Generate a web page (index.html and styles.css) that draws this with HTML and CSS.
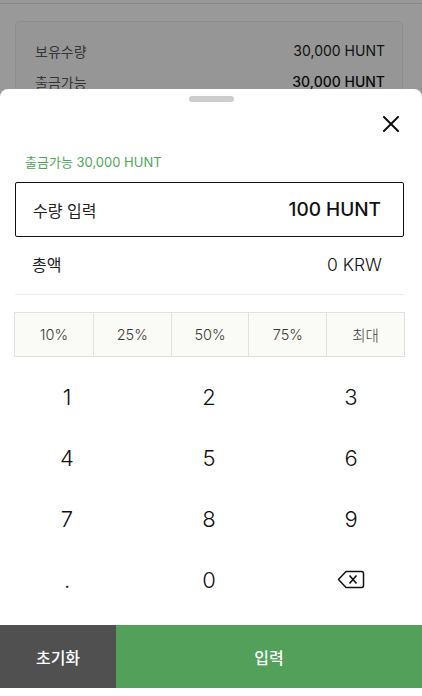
FILE: index.html
```html
<!DOCTYPE html>
<html lang="ko">
<head>
<meta charset="utf-8">
<link rel="stylesheet" href="styles.css">
</head>
<body>
<div class="page">
  <div class="topbar"></div>
  <div class="card">
    <div class="card-row"><span class="card-label">보유수량</span><span class="card-value">30,000 HUNT</span></div>
    <div class="card-row"><span class="card-label">출금가능</span><span class="card-value strong">30,000 HUNT</span></div>
  </div>
</div>
<div class="overlay"></div>
<div class="sheet">
  <div class="handle"></div>
  <div class="sheet-head">
    <svg class="close" viewBox="0 0 16 16" width="16" height="16"><path d="M1 1L15 15M15 1L1 15" stroke="#111" stroke-width="2" fill="none" stroke-linecap="square"/></svg>
  </div>
  <div class="body">
    <div class="avail">출금가능 30,000 HUNT</div>
    <div class="input-box"><span class="input-label">수량 입력</span><span class="input-value">100 HUNT</span></div>
    <div class="total-row"><span>총액</span><span class="total-value">0 KRW</span></div>
    <div class="pct-row">
      <div class="pct">10%</div><div class="pct">25%</div><div class="pct">50%</div><div class="pct">75%</div><div class="pct">최대</div>
    </div>
  </div>
  <div class="keypad">
    <div class="key">1</div><div class="key">2</div><div class="key">3</div>
    <div class="key">4</div><div class="key">5</div><div class="key">6</div>
    <div class="key">7</div><div class="key">8</div><div class="key">9</div>
    <div class="key">.</div><div class="key">0</div>
    <div class="key"><svg viewBox="0 0 28 19" width="28" height="19"><path d="M9 1.5H24.5a2 2 0 0 1 2 2V15.5a2 2 0 0 1-2 2H9L1.5 9.5Z" fill="none" stroke="#111" stroke-width="1.5" stroke-linejoin="round"/><path d="M12.5 5.5l7 8M19.5 5.5l-7 8" stroke="#111" stroke-width="1.6"/></svg></div>
  </div>
  <div class="actions">
    <button class="btn reset">초기화</button>
    <button class="btn submit">입력</button>
  </div>
</div>
</body>
</html>
```
FILE: styles.css
```css
* { box-sizing: border-box; }
html, body { margin: 0; padding: 0; }
body {
  width: 422px; height: 696px; overflow: hidden; position: relative;
  font-family: Inter, "Noto Sans CJK KR", sans-serif;
  background: #fff; color: #111;
}
.topbar { height: 4px; border-bottom: 1px solid #e2e2e2; }
.page { padding-bottom: 20px; }
.card {
  margin: 17px 19px 0 15px;
  border: 1px solid #ececec; border-radius: 4px;
  background: #fbfbfb;
  padding: 13px 17px 30px 19px;
  height: 200px;
}
.card-row { display: flex; justify-content: space-between; align-items: center; height: 31px; font-size: 14px; }
.card-label { color: #5a5a5a; }
.card-value { color: #222; }
.card-value.strong { color: #111; font-weight: 500; }
.overlay { position: absolute; inset: 0; background: rgba(0,0,0,0.4); }
.sheet {
  position: absolute; left: 0; right: 0; top: 89px; bottom: 0;
  background: #fff; border-radius: 8px 8px 0 0;
  display: flex; flex-direction: column; overflow: hidden;
}
.handle { width: 45px; height: 6px; border-radius: 3px; background: #cdcdcd; margin: 7px auto 0; }
.sheet-head { height: 38px; display: flex; justify-content: flex-end; align-items: center; padding-right: 23px; padding-top: 6px; }
.close { display: block; }
.body { padding: 0 18px 0 15px; }
.avail { color: #4ba85a; font-size: 13px; line-height: 18px; margin-top: 13px; padding-left: 10px; }
.input-box {
  margin-top: 11px; height: 55px; border: 1.5px solid #111; border-radius: 2px;
  display: flex; justify-content: space-between; align-items: center; padding: 0 22px 0 17px;
}
.input-label { font-size: 16px; color: #222; }
.input-value { font-size: 19px; font-weight: 500; color: #111; }
.total-row {
  height: 58px; border-bottom: 1px solid #ececec;
  display: flex; justify-content: space-between; align-items: center;
  padding: 0 22px 3px 17px; font-size: 16px; color: #222;
}
.total-value { font-size: 17.5px; font-weight: 300; color: #111; }
.pct-row {
  margin: 17px -1px 0 -1px; display: grid; grid-template-columns: repeat(5, 1fr);
  border: 1px solid #e2e2dc; background: #fafaf6; height: 45px;
}
.pct { display: flex; align-items: center; justify-content: center; font-size: 14.5px; color: #3a3a3a; font-weight: 300; border-left: 1px solid #e2e2dc; }
.pct:first-child { border-left: none; }
.keypad {
  margin: 9px 0 0 -4px; width: 426px;
  display: grid; grid-template-columns: repeat(3, 142px); grid-auto-rows: 61px;
}
.key { display: flex; align-items: center; justify-content: center; font-size: 22px; font-weight: 300; color: #111; }
.actions { margin-top: 15px; display: flex; height: 63px; }
.btn { border: none; margin: 0; font-family: inherit; font-size: 16px; color: #fff; font-weight: 500; }
.reset { width: 116px; background: #505050; }
.submit { flex: 1; background: #52a05a; }
```
